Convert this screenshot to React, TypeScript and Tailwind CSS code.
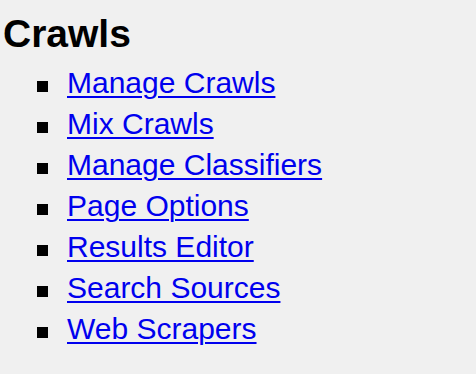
import React from "react";

const items = [
  "Manage Crawls",
  "Mix Crawls",
  "Manage Classifiers",
  "Page Options",
  "Results Editor",
  "Search Sources",
  "Web Scrapers",
];

export default function App() {
  return (
    <div
      className="w-full h-screen bg-[#f0f0f0] pt-[12px] overflow-hidden"
      style={{ fontFamily: '"Liberation Sans", Arial, Helvetica, sans-serif' }}
    >
      <h1 className="text-[39px] leading-[44px] font-bold text-black pl-[3px] m-0">Crawls</h1>
      <ul className="mt-[6px] pl-[37px] flex flex-col">
        {items.map((t) => (
          <li key={t} className="flex items-start h-[41px]">
            <span className="w-[11px] h-[11px] bg-black mt-[19px] shrink-0" />
            <a
              href="#"
              className="ml-[19px] text-[30px] leading-[41px] text-[#0000ee] underline underline-offset-[3px] decoration-[2px]"
            >
              {t}
            </a>
          </li>
        ))}
      </ul>
    </div>
  );
}
